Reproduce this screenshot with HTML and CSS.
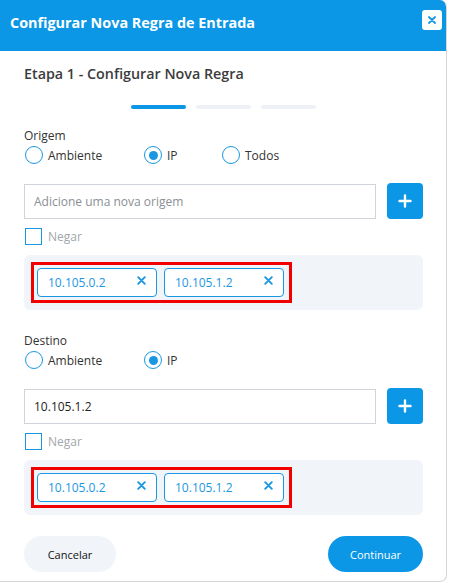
FILE: index.html
```html
<!DOCTYPE html>
<html lang="pt">
<head>
<meta charset="utf-8">
<title>Configurar Nova Regra de Entrada</title>
<link rel="stylesheet" href="styles.css">
</head>
<body>
<div class="modal">
  <header class="modal-header">
    <h1 class="modal-title">Configurar Nova Regra de Entrada</h1>
    <button class="close-btn" type="button" aria-label="Fechar">
      <svg width="10" height="10" viewBox="0 0 10 10"><path d="M2 2L8 8M8 2L2 8" stroke="#1a97e2" stroke-width="1.8" stroke-linecap="round"/></svg>
    </button>
  </header>

  <div class="modal-body">
    <h2 class="step-title">Etapa 1 - Configurar Nova Regra</h2>

    <div class="steps">
      <span class="step active"></span>
      <span class="step"></span>
      <span class="step"></span>
    </div>

    <section class="group">
      <div class="group-label">Origem</div>
      <div class="radios">
        <label class="radio radio-wide"><span class="radio-dot"></span>Ambiente</label>
        <label class="radio radio-mid checked"><span class="radio-dot"></span>IP</label>
        <label class="radio"><span class="radio-dot"></span>Todos</label>
      </div>
      <div class="input-row">
        <div class="text-input placeholder">Adicione uma nova origem</div>
        <button class="add-btn" type="button" aria-label="Adicionar">
          <svg width="14" height="14" viewBox="0 0 14 14"><path d="M7 1.5V12.5M1.5 7H12.5" stroke="#fff" stroke-width="2.4" stroke-linecap="round"/></svg>
        </button>
      </div>
      <label class="check"><span class="check-box"></span>Negar</label>
      <div class="tag-area">
        <div class="tag-group">
          <span class="tag">10.105.0.2<svg class="tag-x" width="9" height="9" viewBox="0 0 9 9"><path d="M1.2 1.2L7.8 7.8M7.8 1.2L1.2 7.8" stroke="#1a97e2" stroke-width="1.9" stroke-linecap="round"/></svg></span>
          <span class="tag">10.105.1.2<svg class="tag-x" width="9" height="9" viewBox="0 0 9 9"><path d="M1.2 1.2L7.8 7.8M7.8 1.2L1.2 7.8" stroke="#1a97e2" stroke-width="1.9" stroke-linecap="round"/></svg></span>
        </div>
      </div>
    </section>

    <section class="group group-dest">
      <div class="group-label">Destino</div>
      <div class="radios">
        <label class="radio radio-wide"><span class="radio-dot"></span>Ambiente</label>
        <label class="radio radio-mid checked"><span class="radio-dot"></span>IP</label>
      </div>
      <div class="input-row">
        <div class="text-input">10.105.1.2</div>
        <button class="add-btn" type="button" aria-label="Adicionar">
          <svg width="14" height="14" viewBox="0 0 14 14"><path d="M7 1.5V12.5M1.5 7H12.5" stroke="#fff" stroke-width="2.4" stroke-linecap="round"/></svg>
        </button>
      </div>
      <label class="check"><span class="check-box"></span>Negar</label>
      <div class="tag-area">
        <div class="tag-group">
          <span class="tag">10.105.0.2<svg class="tag-x" width="9" height="9" viewBox="0 0 9 9"><path d="M1.2 1.2L7.8 7.8M7.8 1.2L1.2 7.8" stroke="#1a97e2" stroke-width="1.9" stroke-linecap="round"/></svg></span>
          <span class="tag">10.105.1.2<svg class="tag-x" width="9" height="9" viewBox="0 0 9 9"><path d="M1.2 1.2L7.8 7.8M7.8 1.2L1.2 7.8" stroke="#1a97e2" stroke-width="1.9" stroke-linecap="round"/></svg></span>
        </div>
      </div>
    </section>

    <footer class="actions">
      <button class="btn btn-cancel" type="button">Cancelar</button>
      <button class="btn btn-primary" type="button">Continuar</button>
    </footer>
  </div>
</div>
</body>
</html>
```

FILE: styles.css
```css
* {
  box-sizing: border-box;
}

body {
  margin: 0;
  background: #ffffff;
  font-family: "Open Sans", "Noto Sans", sans-serif;
  color: #333;
}

.modal {
  width: 447px;
  height: 582px;
  background: #fff;
  border-right: 1px solid #d6d6d6;
  border-bottom: 1px solid #d6d6d6;
  border-radius: 0 7px 7px 0;
  overflow: hidden;
  display: flex;
  flex-direction: column;
}

.modal-header {
  height: 51px;
  background: #0b97e6;
  display: flex;
  align-items: flex-start;
  justify-content: space-between;
  padding: 10px 4px 0 10px;
}

.modal-title {
  margin: 3px 0 0;
  font-size: 14.4px;
  line-height: 20px;
  font-weight: 700;
  color: #fff;
}

.close-btn {
  width: 20px;
  height: 20px;
  border: 0;
  padding: 0;
  border-radius: 3px;
  background: #fff;
  display: flex;
  align-items: center;
  justify-content: center;
}

.modal-body {
  padding: 13px 23px 0 24px;
  display: flex;
  flex-direction: column;
}

.step-title {
  margin: 0;
  font-size: 14.3px;
  line-height: 20px;
  font-weight: 600;
  color: #3c3c3c;
}

.steps {
  display: flex;
  justify-content: center;
  gap: 10px;
  margin-top: 21px;
}

.step {
  width: 55px;
  height: 4px;
  border-radius: 2px;
  background: #eef1f5;
}

.step.active {
  background: #0b97e6;
}

.group {
  margin-top: 18px;
  display: flex;
  flex-direction: column;
}

.group-dest {
  margin-top: 22px;
}

.group-label {
  font-size: 12px;
  line-height: 18px;
  color: #333;
}

.radios {
  display: flex;
  height: 20px;
  align-items: center;
  padding-left: 1px;
}

.radio {
  display: flex;
  align-items: center;
  gap: 5px;
  font-size: 12px;
  color: #333;
}

.radio-wide {
  width: 119px;
}

.radio-mid {
  width: 78px;
}

.radio-dot {
  width: 18px;
  height: 18px;
  border: 1.5px solid #1a97e2;
  border-radius: 50%;
  display: flex;
  align-items: center;
  justify-content: center;
}

.radio.checked .radio-dot::after {
  content: "";
  width: 9px;
  height: 9px;
  border-radius: 50%;
  background: #1a97e2;
}

.input-row {
  margin-top: 18px;
  display: flex;
  gap: 11px;
  height: 36px;
}

.text-input {
  flex: 1;
  height: 35px;
  margin-top: 1px;
  border: 1px solid #cfd4da;
  padding: 0 9px;
  display: flex;
  align-items: center;
  font-size: 12px;
  color: #222;
}

.text-input.placeholder {
  color: #8a8f96;
}

.add-btn {
  width: 36px;
  height: 36px;
  border: 0;
  padding: 0;
  border-radius: 4px;
  background: #0b97e6;
  display: flex;
  align-items: center;
  justify-content: center;
}

.check {
  margin-top: 9px;
  display: flex;
  align-items: center;
  gap: 6px;
  height: 17px;
  padding-left: 1px;
  font-size: 12px;
  color: #a2a6ab;
}

.check-box {
  width: 17px;
  height: 17px;
  border: 1.5px solid #1a97e2;
}

.tag-area {
  margin-top: 10px;
  background: #f1f5f9;
  border-radius: 6px;
  padding: 7px;
}

.tag-group {
  display: inline-flex;
  gap: 7px;
  border: 3px solid #f00000;
  padding: 3px 5px 3px 3px;
}

.tag {
  width: 120px;
  height: 29px;
  border: 1.5px solid #1a97e2;
  border-radius: 4px;
  background: #fff;
  display: flex;
  align-items: center;
  justify-content: space-between;
  padding: 0 10px 1px 10px;
  font-size: 12px;
  color: #1a97e2;
}

.tag-x {
  margin-top: -3px;
}

.actions {
  margin-top: 21px;
  display: flex;
  justify-content: space-between;
}

.btn {
  height: 36px;
  border: 0;
  border-radius: 18px;
  font-family: inherit;
  font-size: 11px;
  font-weight: 500;
}

.btn-cancel {
  width: 92px;
  background: #f1f5f9;
  color: #111;
}

.btn-primary {
  width: 95px;
  background: #0b97e6;
  color: #fff;
}
```
